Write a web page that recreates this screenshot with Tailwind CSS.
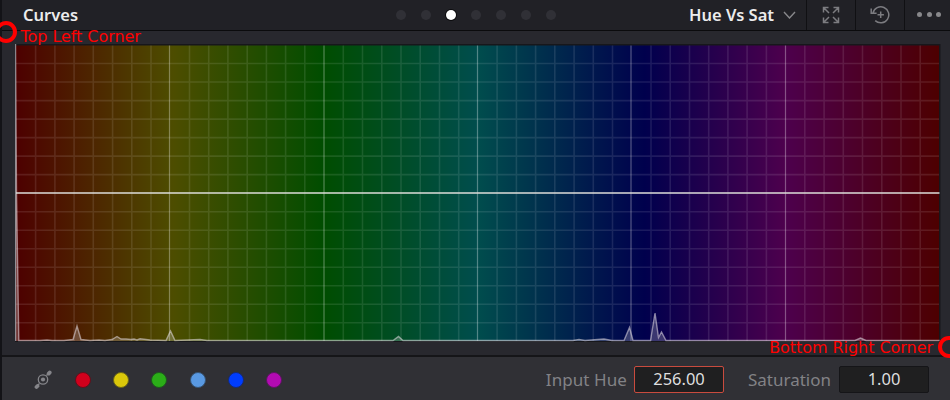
<!DOCTYPE html>
<html lang="en">
<head>
<meta charset="utf-8">
<title>Curves</title>
<script src="https://cdn.jsdelivr.net/npm/@tailwindcss/browser@4"></script>
</head>
<body class="bg-[#28282e]">
<main class="relative h-[400px] w-[950px] overflow-hidden bg-[#28282e] font-['Noto_Sans',sans-serif]">
 <div class="flex h-full flex-col border-l-2 border-[#131317]">
  <header class="flex h-[31px] shrink-0 items-stretch border-b border-[#0b0b0d] bg-[#212126]">
    <h1 class="w-[394px] pl-[21px] text-[16.5px] leading-[30px] font-semibold text-[#ececec]">Curves</h1>
    <nav class="flex w-[166px] items-center gap-[15px]">
      <i class="size-[10px] rounded-full bg-[#303036]"></i>
      <i class="size-[10px] rounded-full bg-[#303036]"></i>
      <i class="size-[10px] rounded-full bg-white ring-1 ring-[#0c0c0e]"></i>
      <i class="size-[10px] rounded-full bg-[#303036]"></i>
      <i class="size-[10px] rounded-full bg-[#303036]"></i>
      <i class="size-[10px] rounded-full bg-[#303036]"></i>
      <i class="size-[10px] rounded-full bg-[#303036]"></i>
    </nav>
    <div class="flex w-[245px] items-center justify-end border-r border-[#101013] pr-[10px]">
      <span class="mr-[9px] text-[16.5px] leading-[30px] font-semibold whitespace-nowrap text-[#ececec]">Hue Vs Sat</span>
      <svg class="h-[8px] w-[13px]" viewBox="0 0 13 8" fill="none" stroke="#88888b" stroke-width="1.4"><path d="M1 1L6.5 7L12 1"/></svg>
    </div>
    <div class="flex w-[49px] items-center justify-center border-r border-[#101013]">
      <svg class="size-[18px]" viewBox="0 0 18 18" fill="none" stroke="#7c7c80" stroke-width="1.5"><path d="M1.5 6.5V1.5H6.5M1.5 1.5L7 7M11.5 1.5H16.5V6.5M16.5 1.5L11 7M1.5 11.5V16.5H6.5M1.5 16.5L7 11M11.5 16.5H16.5V11.5M16.5 16.5L11 11"/></svg>
    </div>
    <div class="flex w-[49px] items-center justify-center border-r border-[#101013]">
      <svg class="h-[18px] w-[20px]" viewBox="0 0 20 18" fill="none" stroke="#7c7c80" stroke-width="1.5"><path d="M3 7A8 8 0 1 1 5.2 14.6M1.2 2.4V7.3H6.6M10.7 5.6V12M7.5 8.8H13.9"/></svg>
    </div>
    <div class="flex flex-1 items-center gap-[4.5px] pt-px pb-[3px] pl-[12px]">
      <i class="size-[5px] rounded-full bg-[#88888b]"></i>
      <i class="size-[5px] rounded-full bg-[#88888b]"></i>
      <i class="size-[5px] rounded-full bg-[#88888b]"></i>
    </div>
  </header>

  <section class="h-[324px] shrink-0 pt-[12px] pl-[13px]">
    <svg class="block" width="926" height="300" viewBox="15 43 926 300" fill="none">
      <defs>
        <linearGradient id="hue" gradientUnits="userSpaceOnUse" x1="16" y1="0" x2="939" y2="0">
          <stop offset="0" stop-color="#4d0000"/><stop offset=".17" stop-color="#4d4d00"/><stop offset=".3333" stop-color="#004d00"/><stop offset=".5" stop-color="#004d4d"/><stop offset=".681" stop-color="#00004d"/><stop offset=".8333" stop-color="#4d004d"/><stop offset="1" stop-color="#4d0000"/>
        </linearGradient>
      </defs>
      <rect x="15" y="44" width="925.5" height="298" fill="#17171b"/>
      <rect x="16" y="45.5" width="923" height="295.5" fill="url(#hue)"/>
      <path id="grid" stroke="#fff" stroke-opacity=".1" stroke-width="1.6"/>
      <path d="M169.5 45.500V341M324 45.500V341M477.500 45.500V341M631 45.500V341M785.500 45.500V341" stroke="#fff" stroke-opacity=".32" stroke-width="1.2"/>
      <path d="M15.500 341V44L16.500 193L18.800 340.500H40L47 340L52 340.500H64L73 339.500L77 326L81 339.500L90 340.500L99 340L105 340.500L112 339.500L117 336.500L121 339L126 339L131 339.500L134 339L137 340L140 338.800L150 340L166 340.500L170.500 331L175 340.500L200 339.500L207 340.500H393L398.500 336.500L403 340.500H573L579 339.500L585 340.500L604 339L612 340.500H624L629.500 327.500L633 340.500H650.500L655 313L658.500 337.500L661.500 332L666 340.500H855L860.500 338L866 340.500H939V341" stroke="#e6dfe6" stroke-opacity=".55" stroke-width="1.4" fill="#ddd" fill-opacity=".25"/>
      <path d="M16 193H939.500" stroke="#dededa" stroke-width="1.6"/>
    </svg>
  </section>

  <footer class="flex flex-1 items-center border-t-2 border-[#151518] bg-[#303035] pl-[32px] text-[17px]">
    <svg class="mt-[2px] size-[20px] shrink-0" viewBox="0 0 20 20" fill="none" stroke="#85858a" stroke-width="1.3"><circle cx="9" cy="9.500" r="4.700"/><circle cx="9" cy="9.500" r="2.100" fill="#85858a" stroke="none"/><path d="M12.500 5.500L14.500 3.500M5.500 13.500L3.500 15.500"/><path d="M14.700 3.600L15.700 2.500M2.500 17L3.500 16" stroke-width="3.800" stroke-linecap="round" /></svg>
    <div class="mt-[2px] ml-[20.500px] flex w-[469.500px] shrink-0 gap-[22.400px]">
      <i class="size-[16px] shrink-0 rounded-full border border-[#60101c] bg-[#d1001c]"></i>
      <i class="size-[16px] shrink-0 rounded-full border border-[#696519] bg-[#dac70a]"></i>
      <i class="size-[16px] shrink-0 rounded-full border border-[#1d5b1d] bg-[#2bad18]"></i>
      <i class="size-[16px] shrink-0 rounded-full border border-[#365474] bg-[#5999e2]"></i>
      <i class="size-[16px] shrink-0 rounded-full border border-[#152a76] bg-[#003dff]"></i>
      <i class="size-[16px] shrink-0 rounded-full border border-[#5b1660] bg-[#b20bb2]"></i>
    </div>
    <span class="mt-[2px] w-[83px] shrink-0 text-right tracking-[0.08px] whitespace-nowrap text-[#828286]">Input Hue</span>
    <span class="mt-px ml-[7px] flex h-[27px] w-[90px] shrink-0 items-center justify-center rounded-[2px] border border-[#c94b3e] bg-[#1f1f20] text-[16.500px] text-[#dededf]">256.00</span>
    <span class="mt-[2px] ml-[24px] w-[84px] shrink-0 whitespace-nowrap text-[#828286]">Saturation</span>
    <span class="mt-px ml-[7px] flex h-[27px] w-[90px] shrink-0 items-center justify-center rounded-[2px] border border-[#151518] bg-[#1f1f20] text-[16.500px] text-[#dededf]">1.00</span>
  </footer>
 </div>

  <div class="absolute top-[21px] left-[-5px] size-[22px] rounded-full border-4 border-[#f00]"></div>
  <div class="absolute top-[27px] left-[20.500px] font-['DejaVu_Sans',sans-serif] text-[16px] leading-[19px] tracking-[-0.05px] whitespace-nowrap text-[#f00]">Top Left Corner</div>
  <div class="absolute top-[336px] left-[938px] size-[22px] rounded-full border-4 border-[#f00]"></div>
  <div class="absolute top-[338px] right-[17px] font-['DejaVu_Sans',sans-serif] text-[16px] leading-[19px] tracking-[-0.05px] whitespace-nowrap text-[#f00]">Bottom Right Corner</div>
</main>
<script>
  let d = '';
  for (let i = 1; i < 48; i++) if (i % 8) d += `M${(16.4 + i * 19.23).toFixed(1)} 45.5V341`;
  for (let i = 1; i < 16; i++) if (i !== 8) d += `M16 ${(45 + i * 18.52).toFixed(1)}H939`;
  document.getElementById('grid').setAttribute('d', d);
</script>
</body>
</html>
